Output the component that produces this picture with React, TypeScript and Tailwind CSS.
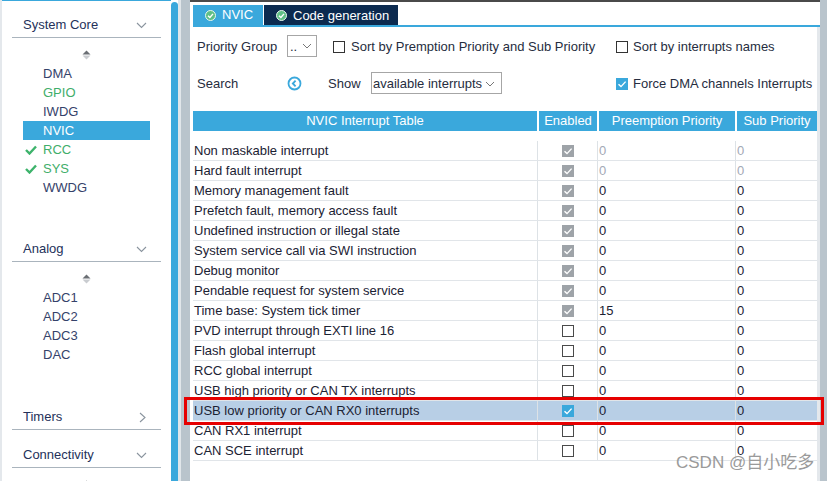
import React from "react";

type Row = {
  name: string;
  state: "dis" | "off" | "on";
  pre: string;
  sub: string;
  faded?: boolean;
  hl?: boolean;
};

const rows: Row[] = [
  { name: "Non maskable interrupt", state: "dis", pre: "0", sub: "0", faded: true },
  { name: "Hard fault interrupt", state: "dis", pre: "0", sub: "0", faded: true },
  { name: "Memory management fault", state: "dis", pre: "0", sub: "0" },
  { name: "Prefetch fault, memory access fault", state: "dis", pre: "0", sub: "0" },
  { name: "Undefined instruction or illegal state", state: "dis", pre: "0", sub: "0" },
  { name: "System service call via SWI instruction", state: "dis", pre: "0", sub: "0" },
  { name: "Debug monitor", state: "dis", pre: "0", sub: "0" },
  { name: "Pendable request for system service", state: "dis", pre: "0", sub: "0" },
  { name: "Time base: System tick timer", state: "dis", pre: "15", sub: "0" },
  { name: "PVD interrupt through EXTI line 16", state: "off", pre: "0", sub: "0" },
  { name: "Flash global interrupt", state: "off", pre: "0", sub: "0" },
  { name: "RCC global interrupt", state: "off", pre: "0", sub: "0" },
  { name: "USB high priority or CAN TX interrupts", state: "off", pre: "0", sub: "0" },
  { name: "USB low priority or CAN RX0 interrupts", state: "on", pre: "0", sub: "0", hl: true },
  { name: "CAN RX1 interrupt", state: "off", pre: "0", sub: "0" },
  { name: "CAN SCE interrupt", state: "off", pre: "0", sub: "0" },
];

function Tick() {
  return (
    <svg width="12" height="12" viewBox="0 0 12 12">
      <polyline points="2.5,6.2 5,8.6 9.6,3.6" fill="none" stroke="white" strokeWidth="1.4" />
    </svg>
  );
}

function Box({ state }: { state: "dis" | "off" | "on" }) {
  if (state === "off")
    return <div className="w-[12px] h-[12px] border border-[#4a4a4a] bg-white" />;
  return (
    <div className={`w-[12px] h-[12px] ${state === "dis" ? "bg-[#9ea3a8]" : "bg-[#3aa8dc]"}`}>
      <Tick />
    </div>
  );
}

function Chevron({ right }: { right?: boolean }) {
  return right ? (
    <svg width="10" height="11" viewBox="0 0 10 11">
      <polyline points="3,1 8,5.5 3,10" fill="none" stroke="#8a949e" strokeWidth="1.1" />
    </svg>
  ) : (
    <svg width="11" height="7" viewBox="0 0 11 7">
      <polyline points="1,1 5.5,5.5 10,1" fill="none" stroke="#8a949e" strokeWidth="1.1" />
    </svg>
  );
}

function SortArrows() {
  return (
    <div className="pt-[12px] h-[26px] pl-[80px]">
      <svg width="9" height="10" viewBox="0 0 9 10" className="block">
        <polygon points="4.5,0.5 8.5,4.5 0.5,4.5" fill="#6b6f74" />
        <polygon points="4.5,9.5 8.5,5.5 0.5,5.5" fill="#c9ccd0" />
      </svg>
    </div>
  );
}

function GreenCheck() {
  return (
    <svg width="12" height="10" viewBox="0 0 12 10">
      <polyline points="1,5 4.5,8.5 11,1.5" fill="none" stroke="#3db36b" strokeWidth="2.4" />
    </svg>
  );
}

function Section({ title, right, mt }: { title: string; right?: boolean; mt: string }) {
  return (
    <div
      className={`${mt} ml-[10px] w-[149px] h-[37px] pt-[15px] pb-[3px] pl-[11px] pr-[14px] leading-[18px] border-b border-[#aab4bd] flex items-center justify-between text-[#24315a]`}
    >
      <span>{title}</span>
      <Chevron right={right} />
    </div>
  );
}

function Item({ label, tone }: { label: string; tone?: "green" | "sel" | "check" }) {
  const color =
    tone === "sel"
      ? "text-white bg-[#3aa8dc]"
      : tone === "green" || tone === "check"
        ? "text-[#3fae6a]"
        : "text-[#35426a]";
  return (
    <div className={`ml-[21px] w-[127px] h-[19px] leading-[19px] flex items-center ${color}`}>
      <div className="w-[20px] pl-[2px] flex items-center">{tone === "check" && <GreenCheck />}</div>
      <span>{label}</span>
    </div>
  );
}

function TabIcon() {
  return (
    <svg width="11" height="11" viewBox="0 0 11 11">
      <circle cx="5.5" cy="5.5" r="5" fill="#5fbf86" stroke="#e8f7ee" strokeWidth="1" />
      <polyline points="3,5.7 4.9,7.5 8,3.9" fill="none" stroke="white" strokeWidth="1.4" />
    </svg>
  );
}

function SmallCheck({ on }: { on?: boolean }) {
  return on ? (
    <div className="w-[12px] h-[12px] bg-[#3aa8dc]">
      <Tick />
    </div>
  ) : (
    <div className="w-[12px] h-[12px] border border-[#333] bg-white" />
  );
}

export default function App() {
  return (
    <div className="relative w-[827px] h-[481px] flex overflow-hidden bg-white text-[13px] font-['Liberation_Sans',Arial,sans-serif]">
      {/* left panel */}
      <div className="w-[2px] bg-[#e4e8ec]" />
      <div className="w-[169px] shrink-0 border-t border-[#3aa8dc] overflow-hidden">
        <Section title="System Core" mt="mt-0" />
        <SortArrows />
        <Item label="DMA" />
        <Item label="GPIO" tone="green" />
        <Item label="IWDG" />
        <Item label="NVIC" tone="sel" />
        <Item label="RCC" tone="check" />
        <Item label="SYS" tone="check" />
        <Item label="WWDG" />
        <Section title="Analog" mt="mt-[28px]" />
        <SortArrows />
        <Item label="ADC1" />
        <Item label="ADC2" />
        <Item label="ADC3" />
        <Item label="DAC" />
        <Section title="Timers" right mt="mt-[29px]" />
        <Section title="Connectivity" mt="mt-[1px]" />
        <SortArrows />
      </div>
      <div className="w-[7px] mt-[2px] rounded-t-[4px] bg-[#3aa8dc]" />
      <div className="w-[3px] bg-[#e1e6ea]" />
      <div className="w-[9px] bg-[#b9c4cc]" />

      {/* main */}
      <div className="w-[630px] shrink-0 flex flex-col border-t-2 border-[#4a4a4a]">
        <div className="pt-[3px] pl-[3px] flex h-[23px] shrink-0">
          <div className="w-[70px] h-[20px] bg-[#3aa8dc] text-white flex items-center gap-[6px] pl-[12px]">
            <TabIcon />
            <span>NVIC</span>
          </div>
          <div className="ml-[1px] w-[134px] h-[21px] bg-[#0c2a4f] text-white flex items-center gap-[6px] pl-[12px]">
            <TabIcon />
            <span>Code generation</span>
          </div>
        </div>
        <div className="ml-[3px] h-[2px] shrink-0 bg-[#3aa8dc]" />
        <div className="flex-1 pl-[3px] border-r-[3px] border-[#e4e8ec] text-[#262d40]">
          {/* options row 1 */}
          <div className="mt-[8px] h-[22px] flex items-center pt-[2px]">
            <span className="w-[94px] pl-[4px]">Priority Group</span>
            <div className="w-[30px] h-[22px] -mt-[2px] border border-[#a6a6a6] flex items-center justify-between pl-[2px] pr-[4px]">
              <span className="leading-none">..</span>
              <svg width="10" height="6" viewBox="0 0 10 6">
                <polyline points="1,1 5,5 9,1" fill="none" stroke="#777" strokeWidth="1" />
              </svg>
            </div>
            <div className="ml-[16px] w-[283px] flex items-center gap-[6px]">
              <SmallCheck />
              <span>Sort by Premption Priority and Sub Priority</span>
            </div>
            <div className="flex items-center gap-[5px]">
              <SmallCheck />
              <span>Sort by interrupts names</span>
            </div>
          </div>
          {/* options row 2 */}
          <div className="mt-[15px] h-[22px] flex items-center pt-[2px]">
            <span className="w-[94px] pl-[4px]">Search</span>
            <svg width="15" height="15" viewBox="0 0 15 15" className="-mt-[2px]">
              <circle cx="7.5" cy="7.5" r="6" fill="none" stroke="#3aa8dc" strokeWidth="1.8" />
              <polyline points="8.6,4.6 5.8,7.5 8.6,10.4" fill="none" stroke="#3aa8dc" strokeWidth="1.8" />
            </svg>
            <span className="ml-[26px] w-[43px]">Show</span>
            <div className="w-[131px] h-[22px] -mt-[2px] border border-[#a6a6a6] flex items-center justify-between pl-[1px] pr-[6px] pt-[1px]">
              <span>available interrupts</span>
              <svg width="10" height="6" viewBox="0 0 10 6">
                <polyline points="1,1 5,5 9,1" fill="none" stroke="#777" strokeWidth="1" />
              </svg>
            </div>
            <div className="ml-[114px] flex items-center gap-[5px]">
              <SmallCheck on />
              <span>Force DMA channels Interrupts</span>
            </div>
          </div>

          {/* table */}
          <div className="mt-[17px] grid grid-cols-[344px_60px_138px_82px] h-[19px] text-white">
            <div className="bg-[#3aa8dc] flex items-center justify-center">NVIC Interrupt Table</div>
            <div className="bg-[#3aa8dc] border-l-2 border-white flex items-center justify-center">Enabled</div>
            <div className="bg-[#3aa8dc] border-l-2 border-white flex items-center justify-center">Preemption Priority</div>
            <div className="bg-[#3aa8dc] border-l-2 border-white flex items-center justify-center">Sub Priority</div>
          </div>
          <div className="h-[11px]" />
          <div className="text-[#1b2233]">
            {rows.map((r) => (
              <div
                key={r.name}
                className={`grid grid-cols-[344px_60px_138px_82px] h-[20px] border-b border-[#e1e5e9] ${r.hl ? "bg-[#b8cfe6]" : ""}`}
              >
                <div className="pl-[1px] leading-[19px]">{r.name}</div>
                <div className="border-l border-[#dde2e6] flex items-center justify-center">
                  <Box state={r.state} />
                </div>
                <div className={`border-l border-[#dde2e6] pl-[1px] leading-[19px] ${r.faded ? "text-[#a3a9b6]" : ""}`}>
                  {r.pre}
                </div>
                <div className={`border-l border-[#dde2e6] pl-[1px] leading-[19px] ${r.faded ? "text-[#a3a9b6]" : ""}`}>
                  {r.sub}
                </div>
              </div>
            ))}
          </div>
        </div>
      </div>
      <div className="w-[7px] bg-[#b9c4cc]" />

      {/* annotation + watermark */}
      <div className="absolute left-[184px] top-[397px] w-[640px] h-[28px] border-[3px] border-[#e60000]" />
      <div className="absolute left-[676px] top-[452px] text-[17px] leading-[22px] text-[#9a9a9a] font-['Liberation_Sans','Noto_Sans_CJK_SC',sans-serif]">
        CSDN @自小吃多
      </div>
    </div>
  );
}
